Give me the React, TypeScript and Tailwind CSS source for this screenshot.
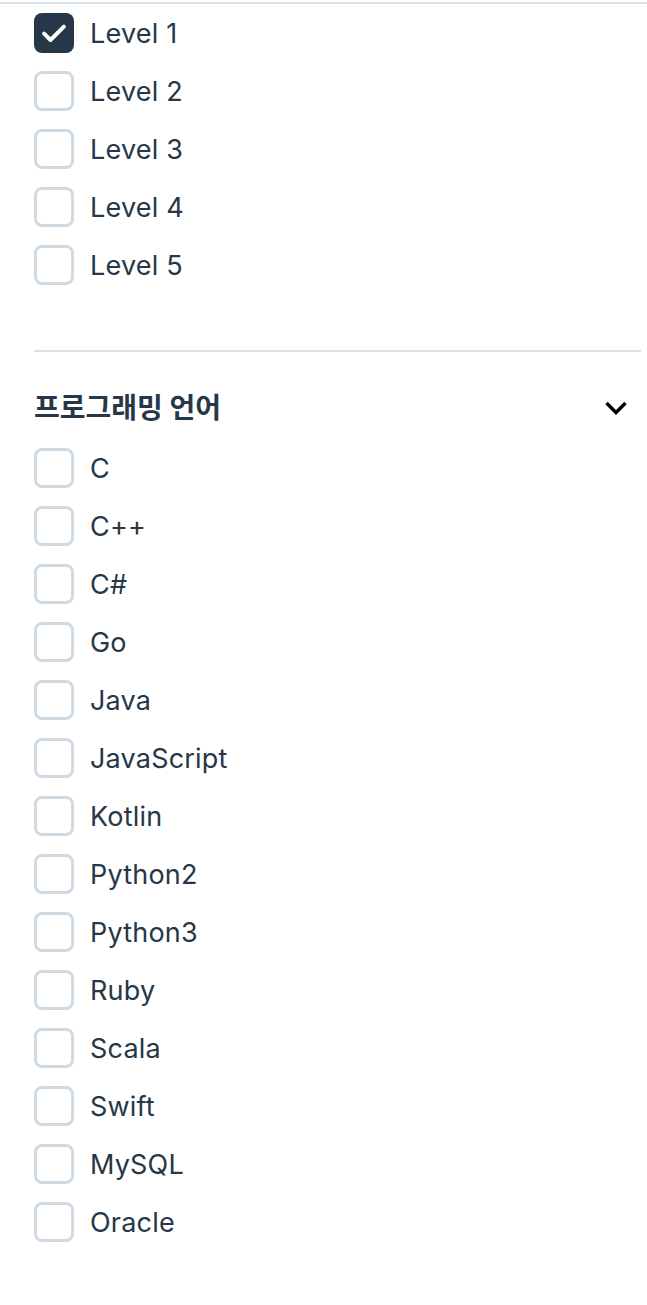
import { useState } from "react";

const LEVELS = ["Level 1", "Level 2", "Level 3", "Level 4", "Level 5"];
const LANGUAGES = [
  "C",
  "C++",
  "C#",
  "Go",
  "Java",
  "JavaScript",
  "Kotlin",
  "Python2",
  "Python3",
  "Ruby",
  "Scala",
  "Swift",
  "MySQL",
  "Oracle",
];

function CheckRow({ label, checked, onToggle }: { label: string; checked: boolean; onToggle: () => void }) {
  return (
    <label className="flex h-[58px] cursor-pointer items-center gap-[16px]" onClick={onToggle}>
      <span
        className={
          "flex h-[40px] w-[40px] shrink-0 items-center justify-center rounded-[8px] " +
          (checked ? "bg-[#263747]" : "border-[3px] border-[#d0dae3] bg-white")
        }
      >
        {checked && (
          <svg width="28" height="28" viewBox="0 0 24 24" fill="none">
            <polyline points="3.5,12.5 9,18 20.5,6.5" stroke="white" strokeWidth="3.4" strokeLinecap="round" strokeLinejoin="round" />
          </svg>
        )}
      </span>
      <span className="text-[27px] leading-none tracking-[0.2px] text-[#263747]">{label}</span>
    </label>
  );
}

export default function App() {
  const [levels, setLevels] = useState<string[]>(["Level 1"]);
  const [langs, setLangs] = useState<string[]>([]);
  const [open, setOpen] = useState(true);

  const toggle = (list: string[], set: (v: string[]) => void, v: string) =>
    set(list.includes(v) ? list.filter(x => x !== v) : [...list, v]);

  return (
    <div className="min-h-[1305px] bg-white pt-[2px]" style={{ fontFamily: 'Inter, "Noto Sans CJK KR", sans-serif' }}>
      <div className="border-t-2 border-[#d7e2eb]" />
      <div className="pl-[34px]">
        <div className="flex flex-col">
          {LEVELS.map(l => (
            <CheckRow key={l} label={l} checked={levels.includes(l)} onToggle={() => toggle(levels, setLevels, l)} />
          ))}
        </div>
        <div className="mr-[6px] mt-[56px] border-t-2 border-[#d7e2eb]" />
        <div className="mt-[27px] flex h-[58px] items-center justify-between pr-[19px]">
          <span className="text-[28px] font-bold text-[#263747]">프로그래밍 언어</span>
          <button onClick={() => setOpen(!open)} className="flex items-center justify-center">
            <svg width="24" height="14" viewBox="0 0 24 14" fill="none">
              <polyline points="2.5,2 12,11.5 21.5,2" stroke="black" strokeWidth="3.4" />
            </svg>
          </button>
        </div>
        {open && (
          <div className="mt-[2px] flex flex-col">
            {LANGUAGES.map(l => (
              <CheckRow key={l} label={l} checked={langs.includes(l)} onToggle={() => toggle(langs, setLangs, l)} />
            ))}
          </div>
        )}
      </div>
    </div>
  );
}
